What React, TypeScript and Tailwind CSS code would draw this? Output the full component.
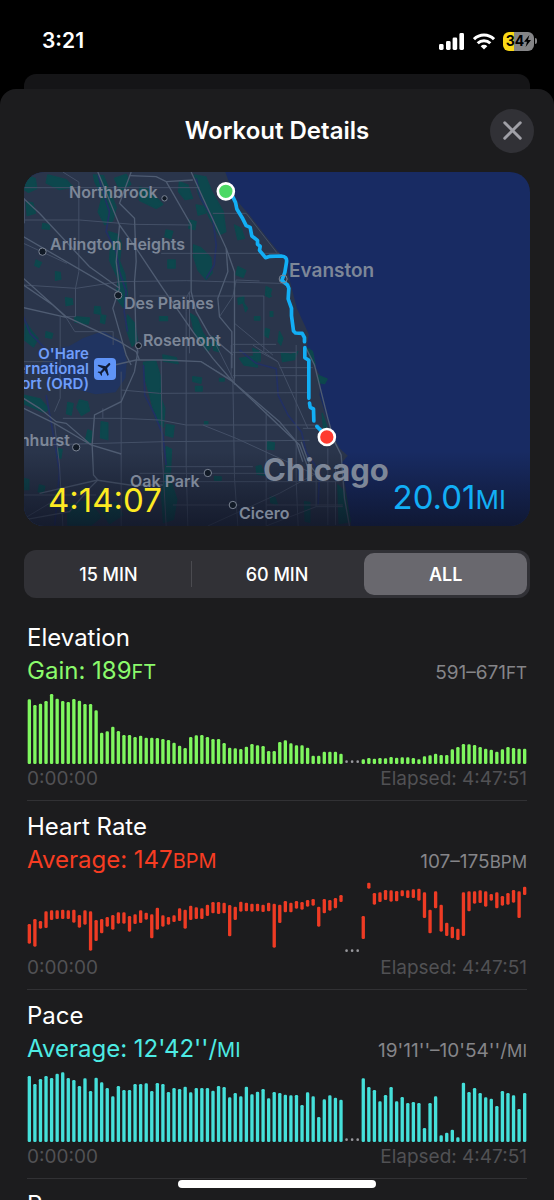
import { useState } from 'react'
import { X } from 'lucide-react'
import { MdFlight } from 'react-icons/md'

// [top, bottom] of one sample, in chart units. null = workout paused
type Sample = [number, number] | null

const CHART_W = 1500
const CHART_H = 216
const PAUSE: null[] = [null, null, null]

const fromBase = (heights: number[]): Sample[] => heights.map(h => [CHART_H - h, CHART_H])

const elevation: Sample[] = [
  ...fromBase([
    194, 177, 181, 189, 210, 196, 189, 186, 195, 190, 180, 180, 161, 94, 98, 112, 99, 87, 87, 81,
    85, 79, 79, 78, 75, 72, 64, 55, 48, 81, 86, 87, 81, 75, 75, 63, 49, 47, 45, 52,
    60, 56, 54, 39, 39, 66, 71, 62, 56, 56, 49, 25, 25, 37, 37, 37, 31,
  ]),
  ...PAUSE,
  ...fromBase([
    14, 18, 16, 18, 17, 21, 19, 20, 20, 18, 14, 23, 26, 31, 27, 27, 44, 51, 60, 59,
    57, 51, 46, 43, 37, 44, 51, 48, 46, 46,
  ]),
]

const heartRate: Sample[] = [
  [129, 188], [114, 197], [120, 143], [91, 141], [88, 117], [88, 114], [86, 114], [88, 114], [86, 125], [102, 140],
  [88, 131], [91, 209], [117, 180], [114, 157], [108, 137], [102, 146], [94, 128], [94, 128], [105, 152], [100, 129],
  [88, 126], [95, 116], [100, 172], [80, 146], [103, 137], [108, 131], [103, 123], [82, 120], [86, 143], [74, 117],
  [79, 114], [82, 114], [71, 105], [63, 97], [63, 99], [65, 97], [72, 166], [77, 117], [62, 92], [65, 91],
  [68, 92], [68, 91], [71, 93], [65, 91], [68, 200], [71, 126], [60, 94], [65, 94], [60, 83], [63, 86],
  [57, 77], [54, 74], [77, 137], [54, 97], [57, 89], [51, 82], [42, 63],
  ...PAUSE,
  [105, 174], [5, 23], [36, 71], [34, 63], [27, 57], [28, 62], [30, 61], [28, 46], [28, 51], [25, 51],
  [23, 59], [34, 111], [86, 157], [31, 82], [71, 152], [125, 165], [137, 172], [143, 177], [34, 165], [31, 91],
  [31, 68], [28, 66], [31, 77], [39, 59], [34, 82], [45, 74], [36, 71], [27, 65], [31, 111], [17, 42],
]

const pace: Sample[] = [
  ...fromBase([
    198, 174, 189, 198, 192, 205, 209, 192, 186, 168, 191, 153, 193, 179, 162, 137, 168, 156, 156, 174,
    174, 176, 153, 177, 174, 150, 162, 159, 166, 149, 162, 162, 162, 154, 168, 165, 134, 147, 137, 166,
    143, 151, 159, 131, 150, 147, 142, 140, 141, 111, 149, 137, 75, 128, 140, 133, 127,
  ]),
  ...PAUSE,
  ...fromBase([
    191, 165, 156, 122, 141, 165, 122, 135, 117, 120, 117, 42, 117, 137, 20, 28, 37, 14, 178, 150,
    162, 147, 134, 130, 108, 153, 147, 140, 99, 147,
  ]),
]

const metrics = [
  { title: 'Elevation', summary: 'Gain: 189', unit: 'FT', range: '591–671', rangeUnit: 'FT', text: 'text-[#8bfa6c]', fill: '#7ff75f', samples: elevation },
  { title: 'Heart Rate', summary: 'Average: 147', unit: 'BPM', range: '107–175', rangeUnit: 'BPM', text: 'text-[#f73c22]', fill: '#ee3b24', samples: heartRate },
  { title: 'Pace', summary: "Average: 12'42''/", unit: 'MI', range: "19'11''–10'54''/", rangeUnit: 'MI', text: 'text-[#4debe4]', fill: '#45e0da', samples: pace },
]

const intervals = ['15 MIN', '60 MIN', 'ALL']

function StatusBar() {
  return (
    <div className="flex h-[74px] shrink-0 items-center justify-between pl-[42px] pr-[17px] pt-2">
      <span className="text-[21px] font-semibold leading-6">3:21</span>
      <div className="flex items-center gap-2">
        <svg width="26" height="17" viewBox="0 0 26 17" fill="#fff" aria-hidden="true">
          <rect x="0" y="11" width="4.6" height="6" rx="1.4" />
          <rect x="7" y="8" width="4.6" height="9" rx="1.4" />
          <rect x="13.6" y="4.5" width="4.6" height="12.5" rx="1.4" />
          <rect x="20.4" y="0" width="4.6" height="17" rx="1.4" />
        </svg>
        <svg width="22" height="17" viewBox="0 0 22 17" fill="none" stroke="#fff" strokeWidth="3" aria-hidden="true">
          <path d="M1 6.2a14.2 14.2 0 0 1 20 0" />
          <path d="M4.7 10.2a9 9 0 0 1 12.6 0" />
          <path d="M11 16.5 7.7 13.2a4.7 4.7 0 0 1 6.6 0z" fill="#fff" stroke="none" />
        </svg>
        <div className="flex items-center gap-px">
          <div className="flex h-[19px] w-[31px] items-center justify-center rounded-md bg-linear-to-r from-[#fbd916] from-35% to-[#858587] to-35% text-black">
            <span className="text-[14px] font-bold leading-5">34</span>
            <svg width="7" height="12" viewBox="0 0 7 12" aria-hidden="true">
              <path d="M5.4 0 0 6.8h3L1.6 12 7 5.1H4z" fill="#000" />
            </svg>
          </div>
          <div className="h-[6px] w-[2px] rounded-r-full bg-[#858587]" />
        </div>
      </div>
    </div>
  )
}

function MapDrawing() {
  return (
    <svg className="block h-full w-full" viewBox="12 21 1521 1062" preserveAspectRatio="xMidYMid slice" fill="none" aria-hidden="true">
      <defs>
        <linearGradient id="shade" x1="0" y1="0" x2="0" y2="1">
          <stop offset="0" stopColor="#0c1020" stopOpacity="0" />
          <stop offset="1" stopColor="#0c1020" stopOpacity="0.75" />
        </linearGradient>
      </defs>
      <rect x="0" y="0" width="1560" height="1100" fill="#182b63" />
      <path d="M0 0H610L628 50 655 110 690 150 740 215 778 262 798 290 812 350 832 430 868 508 862 545 885 600 905 640 900 690 922 760 945 820 960 850 985 872 965 895 975 950 985 1010 998 1100H0z" fill="#2a354b" />

      {/* parks */}
      <g fill="#0d474d" strokeLinejoin="round" stroke="#0d474d" strokeWidth="4">
        <path d="M222 30l30 2 20 50 18 45-10 40-24 12-20-38 12-46-22-45z" />
        <path d="M12 30l35 10 5 30-25 12-15-10z M85 30l55 14 20 22-40 8-40-20z M20 110l20 4 8 30-25 8z" />
        <path d="M285 40l35-12 14 30-32 20z M360 66l24 6 46 46-20 12-50-24z M480 50l25 10 14 40-22 4-20-24z" />
        <path d="M525 30l34 6 18 44 34 60 8 60-20 10-30-54-32-70z" />
        <path d="M268 200l26 8 12 30-6 50 16 40 8 60-12 40-22-30 6-56-26-56 4-50z" />
        <path d="M522 240l22 8 30 30 4 46-18 20-24-28-14-42z M445 285h22v24h-22z M655 305l24 12-8 20-22-8z" />
        <path d="M440 195l20 4-6 22-18-6z M510 165l20 5-4 24-18-4z M645 180l20 10 10 30-20 4z M530 120l22 4 6 20-22 6z" />
        <path d="M70 175l20 4v14l-22-2z M50 285l16 8-8 14-12-6z M108 320l14 2 2 20-16 4z M138 398l20 4 2 16-20 4z M226 424l16 2 2 22-20-4z M165 455l45 4-4 18-40-6z M245 450l14 2-4 24-12-4z" />
        <path d="M18 470l20 30 18 20-14 26-26-20z M80 500l20 6-4 14-18-4z M324 450l22 26 8 50-16 18-18-54z M420 455h24v12h-24z" />
        <path d="M512 446l20 12 18 46 26 36-12 20-36-46z M577 514l18 12 4 34-16-4z M655 400l18-6v18l-16 6z M740 365l16 8-6 24-12-6z M705 455h16v10h-16z M738 490l12 4-4 24-12-8z" />
        <path d="M12 690l50 12 26 30-14 10-62-26z M180 705l24 6 6 26-24 14-14-24z M145 712l16 4-6 34-14-4z M245 770l20 4v50l-22-6z M205 795l12 4-4 36-16-4z" />
        <path d="M372 592l36-6 14 46 2 68 12 30-4 56-22-20-20-78-16-56z M440 778l24 4-4 34-22-6z M440 845l16 8-4 90 20 60-10 60-30 10-6-90 12-70z" />
        <path d="M520 635l26 4-2 16-24-6z M528 664h20v14h-20z M600 640h14v8h-14z M430 570l40 8 6 18-44-8z M555 770h10v8h-10z" />
        <path d="M660 580l50-8 4 34-40-6z M700 550l22 10v28l-18-4z M785 562l30 6 20-8-10 24-36 6z M745 830l20 4-2 20-20-2z M710 905l14-4 10 30-22-4z M585 934l20 2v10h-20z" />
        <path d="M865 550l14 10 8 40-18-24z M895 630l28 12-8 14-18-4z M908 745l14 40-10 6z M752 995l14 2 8 22-20-6z M855 1010l16 2v60l-14-4z M955 960l20 20 18 90-34 6z" />
        <path d="M12 940l16 4v30H12z M60 960l16 4-4 20-16-4z M145 1020l60-14 40 50-30 24h-70z M240 1030l50-20 20 40-40 26z M118 850l10 4-4 26-10-4z" />
        <path d="M670 410l14 20-6 10z M745 370l10 24h-12z M780 500l10 20-6 20-8-10z M752 440h8v14h-8z" />
      </g>

      {/* airport grounds */}
      <path d="M190 520l60-22 56 30 16 60-4 50-30 44-60 6-60-16-60-20-50-40 30-60 60-8z" fill="#203461" />

      {/* rivers */}
      <g stroke="#223064" strokeWidth="5">
        <path d="M236 30l14 50 20 60-10 60 30 60 10 60 20 60-6 60 10 60" />
        <path d="M530 40l14 60 36 60 10 80-6 60-24 40" />
        <path d="M372 600l4 90 30 60 24 60 10 90" />
        <path d="M12 455l20 50 60 60" />
        <path d="M660 555l50 40 60 16 6 80 30 60 40 50 14 60 40 60-4 100" />
        <path d="M80 690l20 110 20 120-14 160" />
      </g>

      {/* minor roads */}
      <g stroke="#445067" strokeWidth="3">
        <path d="M12 68H540M12 165H180L340 178 515 180M130 21l48 30V320l-10 50v85h-30M425 265H780M360 393H733V560M580 145h100l92 118" />
        <path d="M12 235l130 60M12 360l158 10 130-20 200-3 280 8M122 455V700l-17 40M500 440v-40l10-20M500 440V900l5 183M645 475l115 95M640 538h130" />
        <path d="M12 590h90M305 675l115 10 450-2M130 760h175l115 5 80 15h400M60 840l370-10 440-4M425 585l3 275 12 223M305 620v463" />
        <path d="M550 780l100 40 240 110M740 740v343M12 990h218M360 925h380M420 950h540M565 1083l215-98 110-60M740 1020h230M640 640l5 300 10 143" />
        <path d="M640 562h190M640 632h230M635 540v100M830 540v410l6 133M700 540l75 50 90 200M645 550v110M105 775l15 125 10 183M780 355l24 3M780 608h100M720 560l55 30" />
        <path d="M890 925v100h80M925 850v230M850 790h60M15 100v75M545 590l100 60M590 540l55 110" />
        <path d="M138 455l28 45h115v40M510 565V380M250 760v-30M440 905h260M460 1020h200M15 1060l100-60M740 1083l150-58M948 900v180M600 455l40-60 10-50 70 3" />
      </g>

      {/* highways */}
      <g stroke="#4f5c72" strokeWidth="4">
        <path d="M12 100l48 45 150 160 90 65M12 215l283 165M235 21l65 159-10 110 10 80-20 60 20 70 20 70 15 30" />
        <path d="M335 21l-35 94 45 45 5 130-5 60 5 190 5 20-10 60-40 90-80 40-7 90 4 90 13 15-25 25-60 70-138 25" />
        <path d="M330 32l80 3 30 15 80-5M440 50l75 130v200l15 60 40 70 70 60M515 21l45 99 60 130 5 70-30 80 5 55 37 45v110" />
        <path d="M620 250l25 70v320M300 180l50 70 80 120 90 130 60 80 60 70 200 190 30 80" />
        <path d="M12 340l128 115 160 75 50 30 10 25M12 360l88 60 40 37M12 428l128 29M285 600l65-15h80l115 5 95 60 140 120 50 60 20 60" />
        <path d="M12 700l48 30 50 40 30 5 75 65 90 27M12 730l93 45 110 65M230 945l100 15h100M60 985l175-40" />
        <path d="M860 550l25 50 40 160 20 70 20 40 10 130 15 83M890 925l-20-25-25-70" />
      </g>

      {/* route */}
      <g stroke="#12aef5" strokeWidth="11" strokeLinejoin="round" strokeLinecap="round">
        <path d="M638 92L648 112 652 132 668 158 680 182 692 187 697 213 714 226 714 238 722 244 720 256 738 278 752 274 785 273Q804 274 801 292L796 322 787 346 804 360 808 370 806 402 816 430 816 452 822 498 828 504 848 505 855 518V530" />
        <path d="M856 548V578L868 586V700M870 714L872 727 882 732 883 768" />
        <path d="M892 784l12 12" />
      </g>
      <rect x="0" y="860" width="1560" height="240" fill="url(#shade)" />
      <circle cx="619" cy="79" r="24" fill="#4cd964" stroke="#fff" strokeWidth="8" />
      <circle cx="922" cy="816" r="24" fill="#ff3b30" stroke="#fff" strokeWidth="8" />

      {/* town dots */}
      <g fill="#111a26" stroke="#7b8494" strokeWidth="3">
        <circle cx="435" cy="100" r="8" />
        <circle cx="69" cy="260" r="11" />
        <circle cx="296" cy="391" r="11" />
        <circle cx="357" cy="542" r="9" />
        <circle cx="170" cy="847" r="11" />
        <circle cx="565" cy="924" r="11" />
        <circle cx="640" cy="1020" r="11" />
        <circle cx="791" cy="342" r="12" fill="none" />
      </g>
    </svg>
  )
}

function RouteMap() {
  return (
    <div className="relative mx-6 h-[354px] overflow-hidden rounded-[20px]">
      <MapDrawing />
      <div className="text-[16px] font-semibold leading-5 text-[#7d8798]">
        <span className="absolute left-[45px] top-[10px]">Northbrook</span>
        <span className="absolute left-[26px] top-[62px]">Arlington Heights</span>
        <span className="absolute left-[100px] top-[121px]">Des Plaines</span>
        <span className="absolute left-[119px] top-[158px]">Rosemont</span>
        <span className="absolute right-[460px] top-[258px] whitespace-nowrap">Elmhurst</span>
        <span className="absolute left-[106px] top-[299px]">Oak Park</span>
        <span className="absolute left-[215px] top-[331px]">Cicero</span>
        <span className="absolute left-[265px] top-[89px] text-[19px]">Evanston</span>
        <span className="absolute left-[239px] top-[280px] text-[31px] font-bold leading-9">Chicago</span>
      </div>
      <div className="absolute right-[441px] top-[174px] whitespace-nowrap text-right text-[15px] font-semibold leading-[15px] text-[#6f9dfa]">
        O'Hare<br />International<br />Airport (ORD)
      </div>
      <div className="absolute left-[70px] top-[186px] flex size-[22px] items-center justify-center rounded bg-[#5f94f8] text-[#101c38]">
        <MdFlight className="size-[18px] rotate-45" />
      </div>
      <span className="absolute bottom-2 left-6 text-[33px] leading-9 text-[#fdea22]">4:14:07</span>
      <span className="absolute bottom-2 right-6 text-[33px] leading-9 text-[#12aef5]">
        20.01<span className="text-[26px]">MI</span>
      </span>
    </div>
  )
}

function Bars({ samples, fill }: { samples: Sample[]; fill: string }) {
  const step = (CHART_W - 14) / (samples.length - 1)
  return (
    <svg className="mt-1 block h-[72px] w-full" viewBox={`0 0 ${CHART_W} ${CHART_H}`} preserveAspectRatio="none" aria-hidden="true">
      {samples.map((s, i) => {
        const x = 7 + i * step
        if (!s) return <circle key={i} cx={x} cy={CHART_H - 7} r="4" fill="#98989d" />
        return <rect key={i} x={x - 5} y={s[0]} width="10" height={s[1] - s[0]} rx="4" fill={fill} />
      })}
    </svg>
  )
}

export default function App() {
  const [interval, setInterval] = useState('ALL')

  return (
    <div className="relative flex h-screen flex-col overflow-hidden bg-black font-['Inter',sans-serif] text-white">
      <StatusBar />
      <div className="mx-6 h-[15px] shrink-0 rounded-t-xl bg-[#151517]" />

      <main className="min-h-0 flex-1 overflow-y-auto rounded-t-2xl bg-[#1c1c1e] [scrollbar-width:none]">
        <header className="relative flex h-[83px] items-center justify-center">
          <h1 className="text-[24px] font-semibold leading-8">Workout Details</h1>
          <button
            aria-label="Close"
            className="absolute right-5 flex size-11 items-center justify-center rounded-full bg-[#313136] text-[#a0a0a7]"
          >
            <X size={31} strokeWidth={2.3} />
          </button>
        </header>

        <RouteMap />

        <div className="mx-6 mt-6 grid h-12 grid-cols-3 rounded-xl bg-[#313136]">
          {intervals.map((label, i) => (
            <button
              key={label}
              onClick={() => setInterval(label)}
              aria-pressed={interval === label}
              className={`relative m-[3px] rounded-[10px] text-[18px] ${interval === label ? 'bg-[#69686e] font-semibold' : 'font-medium'}`}
            >
              {label}
              {i === 0 && <span className="absolute -right-[2px] top-2 h-[26px] w-px bg-[#4b4b50]" />}
            </button>
          ))}
        </div>

        <div className="px-[27px] pt-6">
          {metrics.map(m => (
            <section key={m.title} className="mb-[10px] h-[179px] border-b border-[#313134]">
              <h2 className="text-[24px] leading-8">{m.title}</h2>
              <div className="flex h-[34px] items-center justify-between">
                <p className={`text-[24px] leading-8 ${m.text}`}>
                  {m.summary}<span className="text-[20px]">{m.unit}</span>
                </p>
                <p className="pt-1 text-[19px] leading-6 text-[#858589]">
                  {m.range}<span className="text-[17px]">{m.rangeUnit}</span>
                </p>
              </div>
              <Bars samples={m.samples} fill={m.fill} />
              <div className="flex justify-between pt-[3px] text-[19px] leading-6 text-[#515154]">
                <span>0:00:00</span>
                <span>Elapsed: 4:47:51</span>
              </div>
            </section>
          ))}
          <h2 className="text-[24px] leading-8">Power</h2>
        </div>
      </main>

      <div className="absolute bottom-3 left-1/2 h-2 w-[198px] -translate-x-1/2 rounded-full bg-white" />
    </div>
  )
}
